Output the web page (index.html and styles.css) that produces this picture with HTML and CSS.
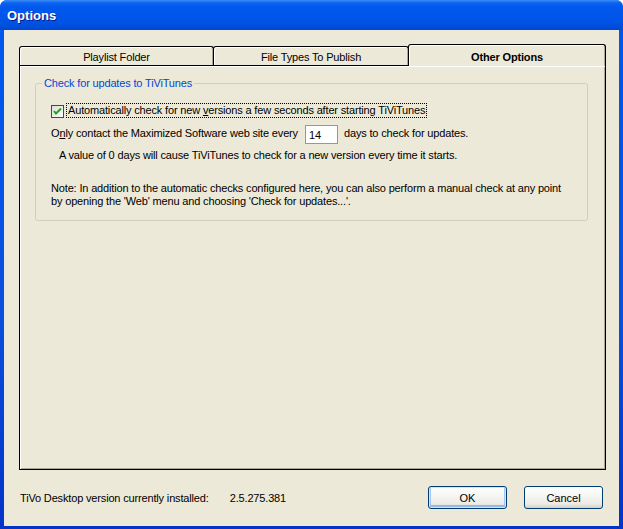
FILE: index.html
```html
<!DOCTYPE html>
<html>
<head>
<meta charset="utf-8">
<title>Options</title>
<link rel="stylesheet" href="styles.css">
</head>
<body>
<div class="window">
  <div class="titlebar"><span class="title">Options</span></div>
  <div class="client">
    <div class="tabctl">
      <div class="tabrow">
        <div class="tab t1">Playlist Folder</div>
        <div class="tab t2">File Types To Publish</div>
        <div class="tab t3 sel">Other Options</div>
      </div>
      <div class="panel">
        <fieldset class="group">
          <legend>Check for updates to TiViTunes</legend>
          <div class="gcontent">
            <div class="row chkrow">
              <svg class="chk" width="13" height="13" viewBox="0 0 13 13">
                <defs>
                  <linearGradient id="cg" x1="0" y1="0" x2="1" y2="1">
                    <stop offset="0" stop-color="#dcdcd7"/>
                    <stop offset="1" stop-color="#ffffff"/>
                  </linearGradient>
                </defs>
                <rect x="0.5" y="0.5" width="12" height="12" fill="url(#cg)" stroke="#1c5180"/>
                <path d="M3 6 L5 8.5 L10 3.5" fill="none" stroke="#21a121" stroke-width="2"/>
              </svg>
              <span class="focus">Automatically check for new <u>v</u>ersions a few seconds after starting TiViTunes</span>
            </div>
            <div class="row daysrow">
              <span>O<u>n</u>ly contact the Maximized Software web site every</span>
              <span class="input">14</span>
              <span>days to check for updates.</span>
            </div>
            <div class="row hint">A value of 0 days will cause TiViTunes to check for a new version every time it starts.</div>
            <div class="note">Note: In addition to the automatic checks configured here, you can also perform a manual check at any point<br>by opening the 'Web' menu and choosing 'Check for updates...'.</div>
          </div>
        </fieldset>
      </div>
    </div>
    <div class="bottom">
      <span class="lbl">TiVo Desktop version currently installed:</span>
      <span class="ver">2.5.275.381</span>
      <span class="spacer"></span>
      <button class="btn default">OK</button>
      <button class="btn">Cancel</button>
    </div>
  </div>
</div>
</body>
</html>
```
FILE: styles.css
```css
html, body {
  margin: 0;
  padding: 0;
  background: #ffffff;
}
body {
  font-family: "Liberation Sans", Arial, sans-serif;
  font-size: 11px;
  letter-spacing: -0.16px;
  color: #000;
}
.window {
  width: 623px;
  height: 529px;
  box-sizing: border-box;
  display: flex;
  flex-direction: column;
  background: linear-gradient(to bottom, #0058ee 0, #0a4fe0 60%, #0433c8 100%);
  border-radius: 7px 7px 0 0;
  overflow: hidden;
}
.titlebar {
  height: 30px;
  flex: none;
  display: flex;
  align-items: center;
  padding-left: 7px;
  background: linear-gradient(to bottom, #3d8df5 0, #0a63f0 3px, #0058ee 7px, #0055e8 20px, #004fdd 26px, #0046d0 30px);
}
.title {
  color: #fff;
  font-weight: bold;
  font-size: 13px;
  letter-spacing: 0;
  text-shadow: 1px 1px 0 #0a1a8a;
  margin-top: 1px;
}
.client {
  flex: 1;
  margin: 0 4px 3px 4px;
  background: #ece9d8;
  display: flex;
  flex-direction: column;
  padding: 14px 0 0 15px;
}
.tabctl {
  width: 587px;
  display: flex;
  flex-direction: column;
}
.tabrow {
  display: flex;
  align-items: flex-end;
  height: 21px;
}
.tab {
  box-sizing: border-box;
  height: 19px;
  border: 1px solid #000;
  border-bottom: none;
  border-radius: 3px 3px 0 0;
  background: #ece9d8;
  box-shadow: inset 1px 1px 0 #fff, inset -1px 0 0 #aca899;
  display: flex;
  align-items: center;
  justify-content: center;
  padding-top: 1px;
}
.t1 { width: 195px; }
.t2 { width: 196px; margin-left: -1px; }
.t3 { width: 198px; margin-left: -1px; }
.tab.sel {
  height: 22px;
  margin-bottom: -1px;
  position: relative;
  z-index: 1;
  font-weight: bold;
  padding-top: 2px;
}
.panel {
  box-sizing: border-box;
  height: 405px;
  border: 1px solid #000;
  box-shadow: inset 1px 1px 0 #fff, inset -1px -1px 0 #aca899;
  padding: 11px 17px 0 15px;
}
.group {
  margin: 0;
  border: 1px solid #d0d0bf;
  border-radius: 3px;
  padding: 13px 0 12px 6px;
}
.group legend {
  color: #0046d5;
  padding: 0 2px;
  line-height: 13px;
}
.gcontent {
  margin-left: 9px;
}
.row {
  display: flex;
  align-items: center;
}
.chkrow {
  height: 15px;
}
.chk {
  margin-top: 2px;
  flex: none;
}
.focus {
  margin-left: 2px;
  border: 1px dotted #000;
  line-height: 13px;
  padding: 0 1px 0 1px;
}
.daysrow {
  margin-top: 7px;
  height: 19px;
}
.daysrow span:first-child {
  margin-top: -3px;
}
.daysrow span:last-child {
  margin-top: -3px;
}
.input {
  box-sizing: border-box;
  width: 33px;
  height: 19px;
  margin: 0 6px 0 7px;
  border: 1px solid #7f9db9;
  background: #fff;
  padding: 3px 0 0 3px;
  line-height: 13px;
}
.hint {
  margin-top: 5px;
  padding-left: 8px;
  line-height: 13px;
}
.note {
  margin-top: 20px;
  line-height: 13px;
}
.bottom {
  margin-top: 16px;
  display: flex;
  align-items: center;
  height: 23px;
  padding-left: 1px;
  padding-right: 16px;
}
.lbl {
  margin-top: 6px;
  align-self: flex-start;
}
.ver {
  margin-left: 21px;
  margin-top: 6px;
  align-self: flex-start;
}
.spacer { flex: 1; }
.btn {
  font-family: "Liberation Sans", Arial, sans-serif;
  font-size: 11px;
  color: #000;
  width: 79px;
  height: 23px;
  border: 1px solid #003c74;
  border-radius: 3px;
  background: linear-gradient(to bottom, #ffffff 0, #f6f6f2 40%, #ecebe6 80%, #d6d0c5 100%);
  padding: 0;
  margin-left: 17px;
}
.btn.default {
  box-shadow: inset 0 0 0 1px #cee7ff, inset 0 -2px 0 1px #98b8ea, inset 2px 0 0 0 #a8c4f0, inset -2px 0 0 0 #a8c4f0;
}
```
